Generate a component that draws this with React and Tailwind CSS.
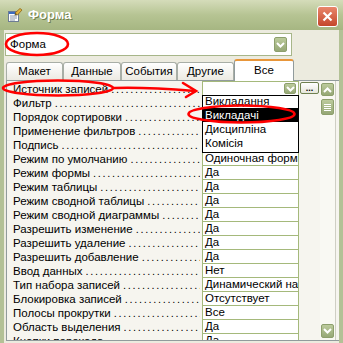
import React from "react";

const rows = [
  ["Источник записей", ""],
  ["Фильтр", ""],
  ["Порядок сортировки", ""],
  ["Применение фильтров", ""],
  ["Подпись", ""],
  ["Режим по умолчанию", "Одиночная форма"],
  ["Режим формы", "Да"],
  ["Режим таблицы", "Да"],
  ["Режим сводной таблицы", "Да"],
  ["Режим сводной диаграммы", "Да"],
  ["Разрешить изменение", "Да"],
  ["Разрешить удаление", "Да"],
  ["Разрешить добавление", "Да"],
  ["Ввод данных", "Нет"],
  ["Тип набора записей", "Динамический набор"],
  ["Блокировка записей", "Отсутствует"],
  ["Полосы прокрутки", "Все"],
  ["Область выделения", "Да"],
  ["Кнопки перехода", "Да"],
];

const tabs = [
  ["Макет", "w-[57px]"],
  ["Данные", "w-[58px]"],
  ["События", "w-[56px]"],
  ["Другие", "w-[57px]"],
];

const listItems = ["Викладання", "Викладачі", "Дисципліна", "Комісія"];

function Chevron({ up = false }) {
  return (
    <svg width="9" height="6" viewBox="0 0 9 6">
      <path
        d={up ? "M1 5 L4.5 1.5 L8 5" : "M1 1 L4.5 4.5 L8 1"}
        fill="none"
        stroke="white"
        strokeWidth="2"
      />
    </svg>
  );
}

function FormIcon() {
  return (
    <svg width="16" height="16" viewBox="0 0 16 16">
      <rect x="1.5" y="4.5" width="10" height="10" fill="#fff" stroke="#6d7c94" />
      <rect x="2" y="5" width="9" height="2" fill="#3c6cc0" />
      <path d="M3 9h7M3 11h7M3 13h5" stroke="#8a96a8" strokeWidth="1" />
      <path d="M8 6 L13 1.5 L15 3 L10.5 8 Z" fill="#e2b33c" stroke="#8a6418" strokeWidth="0.8" />
      <path d="M8 6 L7.5 8.5 L10.5 8" fill="#6b5a2a" />
    </svg>
  );
}

function OliveButton({ className, children }) {
  return (
    <div
      className={
        "flex items-center justify-center rounded-[2px] border border-[#8d9f6c] bg-gradient-to-b from-[#bccb9c] to-[#96a876] " +
        className
      }
    >
      {children}
    </div>
  );
}

export default function App() {
  return (
    <div className="relative w-[343px] h-[343px] overflow-hidden bg-[#b3c196] font-['Liberation_Sans',Arial,sans-serif] text-[11.5px] text-black">
      {/* title bar */}
      <div className="flex h-[30px] items-center bg-gradient-to-b from-[#d5dcba] via-[#b6c493] to-[#a6b682] pl-[7px] pr-[5px]">
        <FormIcon />
        <span className="ml-[5px] text-[13px] font-bold text-white [text-shadow:1px_1px_0_#6f7f4c]">
          Форма
        </span>
        <div className="ml-auto mt-[3px] flex h-[21px] w-[21px] items-center justify-center rounded-[3px] border border-white bg-gradient-to-b from-[#e9866b] to-[#c4462a]">
          <svg width="11" height="11" viewBox="0 0 11 11">
            <path d="M1.5 1.5 L9.5 9.5 M9.5 1.5 L1.5 9.5" stroke="white" strokeWidth="2.2" />
          </svg>
        </div>
      </div>

      {/* body */}
      <div className="mx-[4px] flex h-[313px] flex-col bg-[#ecebdf] pt-[3px]">
        {/* combobox */}
        <div className="ml-[1px] flex h-[23px] w-[287px] items-center border border-[#a7b689] bg-white pl-[4px] pr-[4px]">
          <span>Форма</span>
          <OliveButton className="ml-auto h-[15px] w-[13px]">
            <Chevron />
          </OliveButton>
        </div>

        {/* tabs */}
        <div className="ml-[2px] mt-[4px] flex h-[21px] items-end border-b border-[#919b9c]">
          {tabs.map(([t, w]) => (
            <div
              key={t}
              className={
                "flex h-[18px] items-center justify-center rounded-t-[3px] border border-b-0 border-[#a8aea6] bg-gradient-to-b from-white to-[#eceae2] " +
                w
              }
            >
              {t}
            </div>
          ))}
          <div className="relative -mb-px flex h-[22px] w-[60px] items-center justify-center rounded-t-[3px] border-x border-[#919b9c] border-t-2 border-t-[#e8963a] bg-white">
            Все
          </div>
        </div>

        {/* property grid */}
        <div className="ml-[2px] flex h-[260px] overflow-hidden border-b border-l border-[#919b9c] bg-[#f6f5ef]">
          <div className="flex flex-col">
            {rows.map(([label, value], i) => (
              <div key={label} className={"flex shrink-0 " + (i === 0 ? "h-[15px]" : "h-[14px]")}>
                <div className="flex w-[195px] items-center overflow-hidden pl-[6px] pr-[2px] leading-[14px]">
                  <span className="shrink-0 whitespace-nowrap">{label}</span>
                  <span className="ml-[3px] flex-1 overflow-hidden whitespace-nowrap text-[11px] tracking-[1.7px]">
                    {".".repeat(60)}
                  </span>
                </div>
                <div
                  className={
                    "flex w-[97px] items-center overflow-hidden whitespace-nowrap border-x border-b border-[#a5b97b] bg-white pl-[2px] leading-[13px] " +
                    (i === 0 ? "border-t pr-[2px]" : "")
                  }
                >
                  {i === 0 ? (
                    <OliveButton className="ml-auto h-[11px] w-[12px]">
                      <Chevron />
                    </OliveButton>
                  ) : (
                    value
                  )}
                </div>
              </div>
            ))}
          </div>

          {/* builder button column */}
          <div className="w-[21px] pl-[1px]">
            <div className="mt-[1px] flex h-[12px] w-[19px] items-center justify-center rounded-[2px] border border-[#6f8050] bg-gradient-to-b from-white to-[#e6e6dc] text-[9px] font-bold leading-none">
              ...
            </div>
          </div>

          {/* scrollbar */}
          <div className="flex w-[16px] flex-col border-r border-[#cfcfc4] bg-[#f9f9f3] pb-[2px] pl-[1px]">
            <OliveButton className="mt-[2px] h-[13px] w-[13px]">
              <Chevron up />
            </OliveButton>
            <OliveButton className="mt-[3px] h-[16px] w-[13px] flex-col gap-[1px]">
              <div className="h-px w-[7px] bg-white" />
              <div className="h-px w-[7px] bg-white" />
              <div className="h-px w-[7px] bg-white" />
              <div className="h-px w-[7px] bg-white" />
            </OliveButton>
            <div className="flex-1" />
            <OliveButton className="h-[14px] w-[13px]">
              <Chevron />
            </OliveButton>
          </div>
        </div>
      </div>

      {/* dropdown list */}
      <div className="absolute left-[202px] top-[95px] h-[58px] w-[97px] overflow-hidden border border-black bg-white">
        <div className="-mt-[2px] flex flex-col">
          {listItems.map((it, i) => (
            <div
              key={it}
              className={
                "h-[14px] whitespace-nowrap pl-[2px] leading-[14px] " +
                (i === 1 ? "bg-black text-white" : "")
              }
            >
              {it}
            </div>
          ))}
        </div>
      </div>

      {/* red annotations */}
      <svg className="pointer-events-none absolute inset-0" width="343" height="343" viewBox="0 0 343 343">
        <g fill="none" stroke="#ff0000" strokeWidth="2.6" strokeLinecap="round">
          <ellipse cx="37" cy="44" rx="31" ry="11" />
          <ellipse cx="58" cy="88" rx="55" ry="7.5" />
          <path d="M114 88 C140 87 170 89 195 91" />
          <path d="M183 83 L196 91 L186 97" />
          <ellipse cx="241.5" cy="114" rx="53" ry="8.5" />
        </g>
      </svg>
    </div>
  );
}
